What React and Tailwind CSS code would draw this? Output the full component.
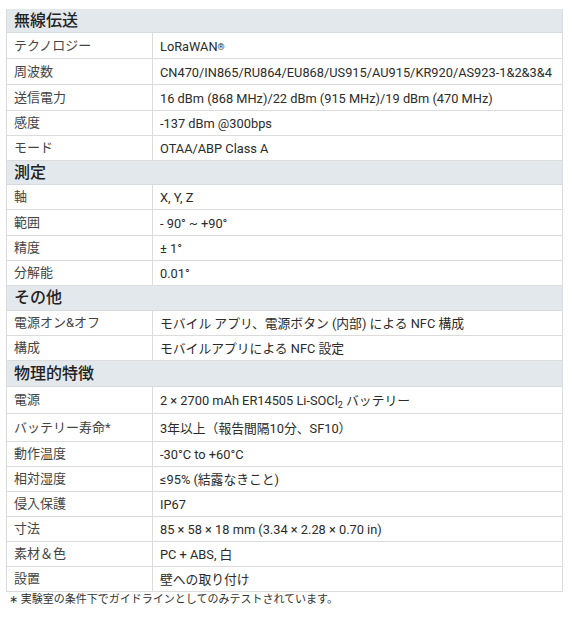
import React from "react";

const font = { fontFamily: "Roboto, 'Noto Sans CJK JP', sans-serif" };

const sections = [
  {
    title: "無線伝送",
    h: "h-[24px]",
    rows: [
      ["テクノロジー", <>LoRaWAN<sup className="text-[9px] relative top-[-1px]">®</sup></>, "h-[26px]"],
      ["周波数", "CN470/IN865/RU864/EU868/US915/AU915/KR920/AS923-1&2&3&4", "h-[26px]"],
      ["送信電力", "16 dBm (868 MHz)/22 dBm (915 MHz)/19 dBm (470 MHz)", "h-[26px]"],
      ["感度", "-137 dBm @300bps", "h-[25px]"],
      ["モード", "OTAA/ABP Class A", "h-[25px]"],
    ],
  },
  {
    title: "測定",
    h: "h-[24px]",
    rows: [
      ["軸", "X, Y, Z", "h-[25px]"],
      ["範囲", "- 90° ~ +90°", "h-[26px]"],
      ["精度", "± 1°", "h-[25px]"],
      ["分解能", "0.01°", "h-[25px]"],
    ],
  },
  {
    title: "その他",
    h: "h-[25px]",
    rows: [
      ["電源オン&オフ", "モバイル アプリ、電源ボタン (内部) による NFC 構成", "h-[25px]"],
      ["構成", "モバイルアプリによる NFC 設定", "h-[25px]"],
    ],
  },
  {
    title: "物理的特徴",
    h: "h-[26px]",
    rows: [
      ["電源", <>2 × 2700 mAh ER14505 Li-SOCl<sub className="text-[9px]">2</sub> バッテリー</>, "h-[27px]"],
      ["バッテリー寿命*", "3年以上（報告間隔10分、SF10）", "h-[28px]"],
      ["動作温度", "-30°C to +60°C", "h-[25px]"],
      ["相対湿度", "≤95% (結露なきこと)", "h-[25px]"],
      ["侵入保護", "IP67", "h-[25px]"],
      ["寸法", "85 × 58 × 18 mm (3.34 × 2.28 × 0.70 in)", "h-[25px]"],
      ["素材＆色", "PC + ABS, 白", "h-[25px]"],
      ["設置", "壁への取り付け", "h-[25px]"],
    ],
  },
];

export default function App() {
  return (
    <div className="w-[574px] h-[622px] bg-white pt-[9px] pl-[6px]" style={font}>
      <div className="w-[557px] border-l border-r border-[#dcdcdc]">
        {sections.map((s) => (
          <div key={s.title}>
            <div className={`${s.h} bg-[#e3e8ed] flex items-center pl-[7px] text-[16px] font-medium text-[#222] border-b border-[#d6dbe0]`}>
              {s.title}
            </div>
            {s.rows.map(([label, value, h], i) => (
              <div key={i} className={`${h} flex border-b border-[#dcdcdc]`}>
                <div className="w-[146px] shrink-0 border-r border-[#dcdcdc] flex items-center pl-[7px] text-[13px] text-[#444]">
                  {label}
                </div>
                <div className="flex items-center pl-[7px] text-[12.8px] text-[#2b2b2b] whitespace-nowrap pt-[2px]">
                  <span>{value}</span>
                </div>
              </div>
            ))}
          </div>
        ))}
      </div>
      <div className="pl-[3px] pt-[1px] text-[11px] text-[#333] leading-[14px]">
        ∗ 実験室の条件下でガイドラインとしてのみテストされています。
      </div>
    </div>
  );
}
